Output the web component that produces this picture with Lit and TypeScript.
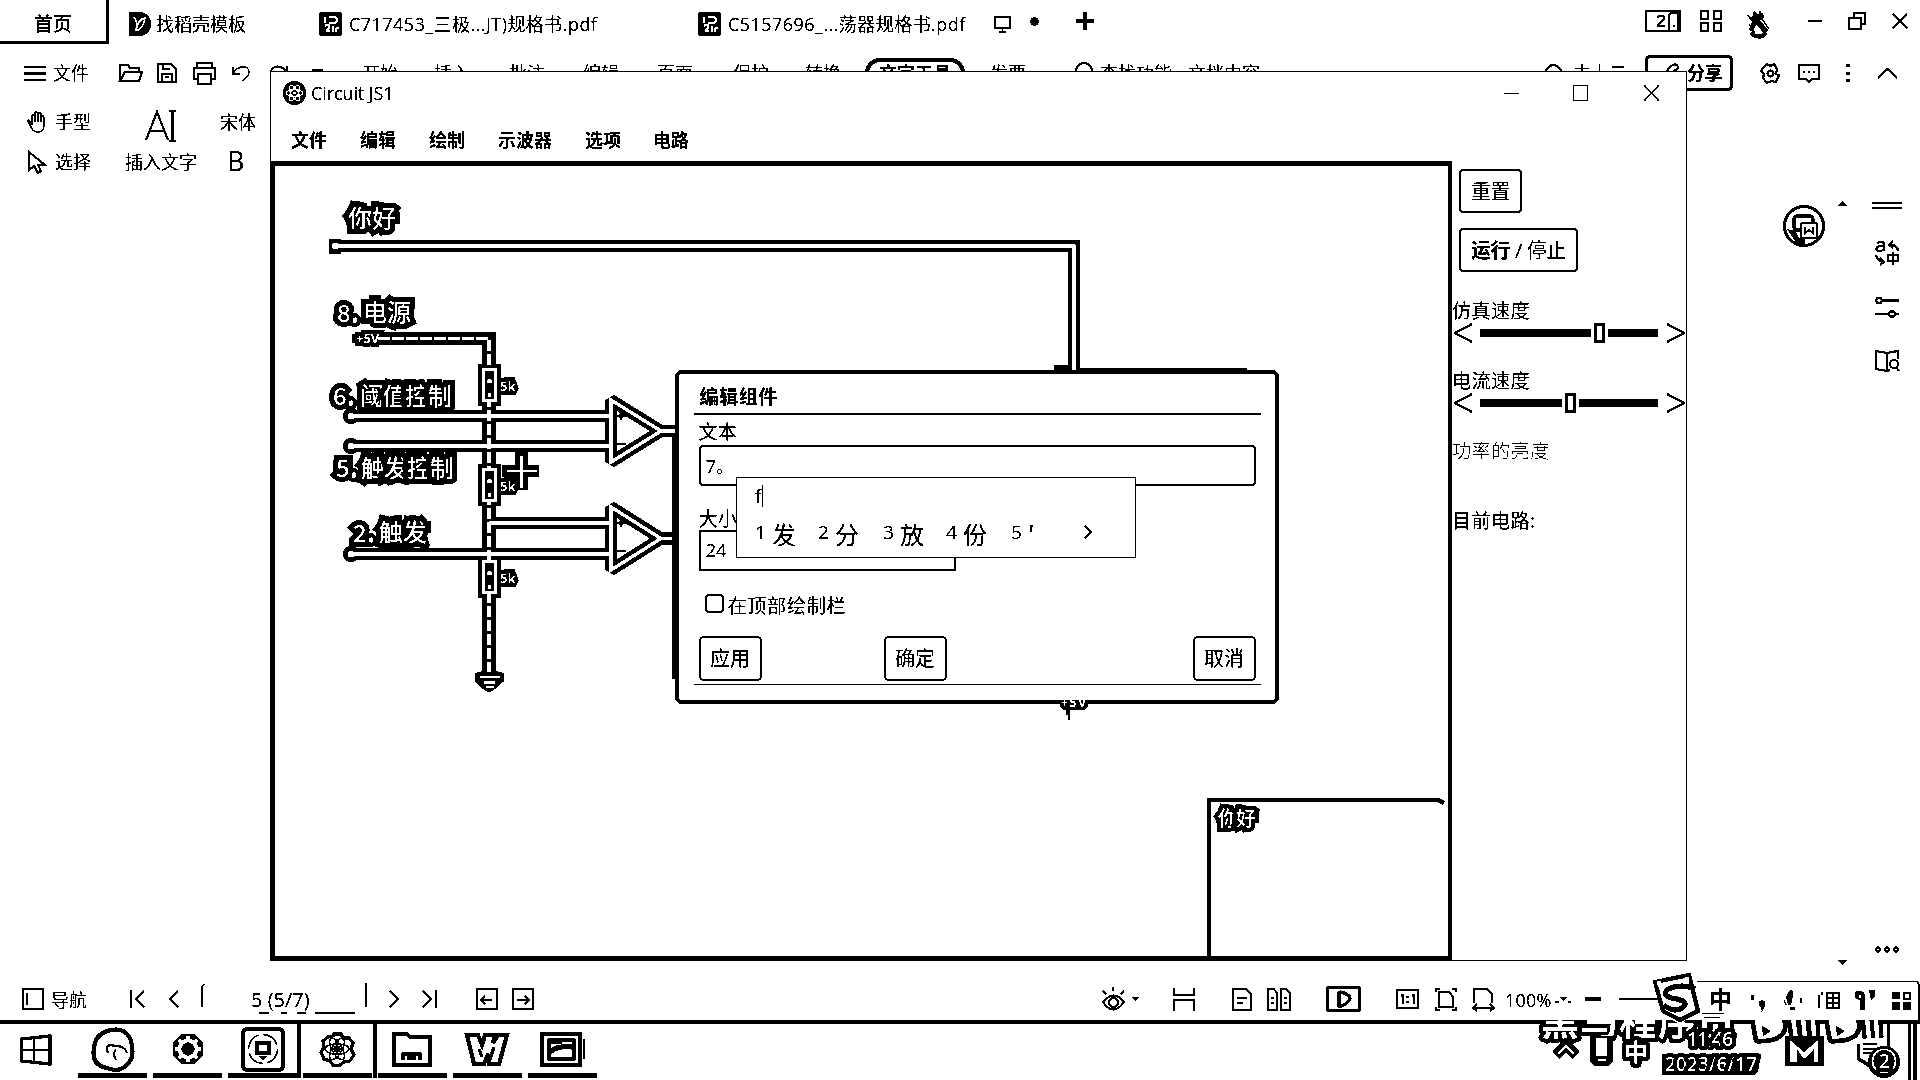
import { LitElement, html, svg, css } from "lit";
import { customElement } from "lit/decorators.js";

const icon = (w: number, h: number, body: unknown, cls = "") =>
  html`<svg class="ic ${cls}" width=${w} height=${h} viewBox="0 0 ${w} ${h}">${body}</svg>`;

const base = css`
  * { box-sizing: border-box; }
  :host {
    font-family: "Open Sans", "Noto Sans CJK SC", sans-serif;
    font-size: 18px;
    line-height: 24px;
    color: #000;
  }
  .ic { display: block; fill: none; stroke: #000; stroke-width: 2; overflow: visible; }
  .f { fill: #000; stroke: none; }
  .w { fill: #fff; stroke: none; }
  .ws { fill: none; stroke: #fff; }
  .s1 { stroke-width: 1.3; }
  .s3 { stroke-width: 3; }
  .s4 { stroke-width: 4; }
  .s5 { stroke-width: 5; }
  span { white-space: nowrap; }
`;

@customElement("office-tabs")
class OfficeTabs extends LitElement {
  static styles = [base, css`
    :host { display: block; }
    .bar {
      display: grid; height: 44px; align-items: center;
      grid-template-columns: 129px 27px 163px 30px 349px 30px 266px 36px 46px 569px 55px 46px 62px 40px 44px 28px;
    }
    .home {
      width: 109px; height: 44px; border-right: 3px solid #000; border-bottom: 3px solid #000;
      padding: 12px 0 0 34px; font-weight: 500; font-size: 19px; letter-spacing: -0.3px;
    }
    .t { padding-top: 3px; }
    .l1 { letter-spacing: 0.45px; }
    .ic { margin-top: 4px; }
    .up { margin-top: -2px; }
  `];
  render() {
    const pdf = svg`<rect class="f" width="23" height="24" rx="3"/><path class="ws" stroke-width="2.4" d="M6 5v6M10 5h5a3 3 0 0 1 0 6h-5M6 14c4-3 6 2 3 3s0 3 2 2M14 14v6M17 16h3M17 20v-4"/>`;
    return html`<div class="bar">
      <div class="home">首页</div>
      ${icon(22, 24, svg`<path class="f" d="M0 0h10c16 0 16 24 0 24H0z"/><path class="ws" stroke-width="1.800" d="M4 5c4 1 4 9 3 14M7 19c1-9 4-12 9-13-1 7-3 11-9 13"/>`)}
      <span class="t">找稻壳模板</span>
      ${icon(23, 24, pdf)}<span class="t l1">C717453_三极...JT)规格书.pdf</span>
      ${icon(23, 24, pdf)}<span class="t l1">C5157696_...荡器规格书.pdf</span>
      ${icon(17, 17, svg`<path d="M1 1h15v11H1zM8.500 12v4M5 16h7" class="s1"/>`)}
      ${icon(9, 9, svg`<circle class="f" cx="4.500" cy="4.500" r="4.200"/>`, "up")}
      ${icon(18, 18, svg`<path class="s3" d="M9 0v18M0 9h18"/>`, "up")}
      ${icon(36, 22, svg`<path d="M1 1h34v20H1z"/><path d="M13 8c0-3 6-3 6 0 0 3-6 5-6 8h7M24 20V5l2-2h7v17"/><path d="M28 16h2"/>`, "up")}
      ${icon(22, 22, svg`<path d="M1 1h7v8H1zM14 1h7v8h-7zM1 13h7v8H1zM14 13h7v8h-7z"/>`, "up")}
      ${icon(26, 28, svg`<path class="f" d="M8 0l3 4 6-1 1 5-4 2 8 10-3 3-9-9-3 8-4-2 3-8-5-7 5 3z"/><path d="M3 14l6 9M16 9l7 10M12 14l5 8M1 5l5 4M14 1v4" class="s1"/><path class="s4" d="M5 23q8 7 15 0"/>`)}
      ${icon(15, 4, svg`<path d="M0 2h14"/>`, "up")}
      ${icon(18, 18, svg`<path class="s1" stroke-width="1.600" d="M1 6h12v11H1zM6 6V1h11v11h-4"/>`, "up")}
      ${icon(16, 16, svg`<path d="M1 1l14 14M15 1L1 15"/>`, "up")}
    </div>`;
  }
}

@customElement("office-ribbon")
class OfficeRibbon extends LitElement {
  static styles = [base, css`
    :host { display: block; }
    .bar {
      display: grid; height: 58px; align-items: center;
      grid-template-columns: 24px 29px 66px 38px 36px 39px 38px 42px 50px 72px 75px 74px 74px 76px 72px 60px 125px 85px 25px 88px 356px 29px 72px 115px 38px 48px 31px 43px;
    }
    .bar > :first-child { grid-column: 2; }
    .pill { width: 100px; height: 30px; border: 4px solid #000; border-radius: 15px; text-align: center; font-weight: 700; line-height: 23px; }
    .share {
      width: 88px; height: 36px; border: 3px solid #000; border-radius: 5px; display: flex; align-items: center;
      padding-left: 17px; gap: 6px; font-weight: 700; letter-spacing: -0.5px;
    }
    .tools {
      display: grid; height: 80px; grid-template-rows: 40px 40px; align-items: center;
      grid-template-columns: 27px 28px 70px 95px 80px;
    }
    .hand { grid-column: 2; }
    .b { font-size: 27px; padding-left: 7px; line-height: 36px; margin-top: -3px; }
    .ai { margin-left: 20px; margin-top: 7px; }
  `];
  render() {
    return html`<div class="bar">
      ${icon(22, 15, svg`<path d="M0 1h22M0 7.500h22M0 14h22"/>`)}
      <span>文件</span>
      ${icon(24, 18, svg`<path d="M1 17V1h8l2 3h9v4M1 17L6 8h17l-3 9z"/>`)}
      ${icon(20, 20, svg`<path d="M1 1h13l5 5v13H1zM5 19v-8h10v8M6 1v5h7M8 14h4"/>`)}
      ${icon(23, 23, svg`<path d="M4 6V1h15v5M4 17H1V6h21v11h-3M5 12h13v10H5z"/>`)}
      ${icon(19, 17, svg`<path class="s1" stroke-width="1.600" d="M1 2v7h7M1 9C4 1 17-1 17 7c0 4-4 7-7 9"/>`)}
      ${icon(19, 17, svg`<path d="M17 1v7h-7M17 8C12-1 1 0 1 8c0 3 4 6 7 7"/>`)}
      ${icon(11, 8, svg`<path d="M0 1h11"/>`)}
      <span>开始</span><span>插入</span><span>批注</span><span>编辑</span><span>页面</span><span>保护</span><span>转换</span>
      <div class="pill">文字工具</div>
      <span>发票</span>
      ${icon(20, 22, svg`<circle cx="9" cy="9" r="8"/><path d="M14 14l6 7"/>`)}
      <span>查找功能</span><span>文档内容</span>
      ${icon(20, 20, svg`<path d="M2 14C0 7 5 2 9 2s8 3 8 7"/>`)}
      <span>未上云</span>
      <div class="share">${icon(16, 20, svg`<path d="M3 12C0 4 12-2 13 4c0 4-8 4-8 9h11"/>`)}<span>分享</span></div>
      ${icon(21, 21, svg`<path d="M7 1l3 2 4-2 3 5-1 5 3 1-3 7-5-1-4 2-4-5 1-4-3-3 3-4z"/><circle cx="10.500" cy="10.500" r="3"/>`)}
      ${icon(22, 19, svg`<path d="M1 1h20v14h-7l-3 3-3-3H1z"/><path d="M5 8h2M10 8h2M15 8h2"/>`)}
      ${icon(4, 18, svg`<path class="f" d="M0 0h4v3H0zM0 8h4v3H0zM0 15h4v3H0z"/>`)}
      ${icon(21, 11, svg`<path d="M1 10L10.500 1 20 10"/>`)}
    </div>
    <div class="tools">
      ${icon(20, 22, svg`<path class="s1" stroke-width="1.800" d="M5 14V5q1-3 3 0V2q1-2 3 0v3-2q2-2 3 0v3q3-3 3 1v7q0 7-6 7-5 0-7-5L1 10q1-3 4 4M8 5v6M11 4v7M14 5v6"/>`, "hand")}
      <span>手型</span>
      ${icon(31, 32, svg`<path d="M1 30L12 2l11 28M5 21h14"/><path d="M24 1h7M24 31h7M27.500 1v30"/>`, "ai")}
      <span>宋体</span><span></span>
      ${icon(20, 23, svg`<path d="M2 1v18l5-4 4 7 3-2-3-6h7z"/>`, "hand")}
      <span>选择</span><span>插入文字</span><span class="b">B</span>
    </div>`;
  }
}

@customElement("side-strip")
class SideStrip extends LitElement {
  static styles = [base, css`
    :host { display: flex; justify-content: flex-end; height: 779px; padding-right: 17px; }
    .a { margin: 23px 13px 0 0; }
    .b { display: flex; flex-direction: column; justify-content: space-between; padding: 19px 24px 0 0; height: 783px; }
    .c { display: flex; flex-direction: column; width: 32px; align-items: center; padding-top: 20px; }
    .g1 { margin-top: 31px; }
    .g2 { margin-top: 32px; }
    .g3 { margin-top: 33px; }
    .g4 { margin-top: 574px; }
  `];
  render() {
    return html`
      ${icon(42, 42, svg`<circle class="s3" cx="21" cy="21" r="19.500"/><rect class="s3" x="11" y="11" width="19" height="14" rx="3"/><path class="f" d="M4 24l8 2 4 7 6 1v5h-8z"/><rect x="18" y="18" width="16" height="15" rx="2" fill="#fff"/><path d="M22 22v6l4-3 4 3v-6"/>`, "a")}
      <div class="b">
        ${icon(9, 5, svg`<path class="f" d="M0 5l4.500-5L9 5z"/>`)}
        ${icon(9, 5, svg`<path class="f" d="M0 0h9L4.500 5z"/>`)}
      </div>
      <div class="c">
        ${icon(30, 7, svg`<path class="s1" d="M0 1h30M0 6h30"/>`)}
        ${icon(24, 25, svg`<path d="M2 3q7-3 7 2v6M9 6C0 5 0 11 4 11q5 0 5-3M18 1l-4 4 4 3M14 5q8-1 9 6M1 15q1 6 8 7M5 18l4 4-4 3M13 15h10v6H13zM18 12v13"/>`, "g1")}
        ${icon(24, 20, svg`<circle cx="4" cy="3.500" r="2.800"/><path d="M7 3.500h17M0 17h14M20 17h4"/><circle cx="17" cy="17" r="2.800"/>`, "g2")}
        ${icon(24, 22, svg`<path d="M12 21V3L1 1v18l11 2M12 3l11-2v8M12 21l3-1"/><circle cx="19" cy="14" r="4"/><path d="M21 17l3 4"/>`, "g3")}
        ${icon(24, 7, svg`<circle cx="3" cy="3.500" r="2"/><circle cx="12" cy="3.500" r="2"/><circle cx="21" cy="3.500" r="2"/>`, "g4")}
      </div>`;
  }
}

@customElement("office-status")
class OfficeStatus extends LitElement {
  static styles = [base, css`
    :host { display: block; }
    .bar {
      display: grid; height: 63px; border-bottom: 4px solid #000; padding: 17px 0 0 22px; align-items: center;
      grid-template-columns: 29px 79px 38px 33px 50px 114px 24px 33px 54px 36px 590px 30px 41px 59px 35px 59px 70px 39px 37px 33px 55px 25px 34px 40px;
    }
    .bar > span { margin-top: 2px; }
    .n { font-size: 20px; }
    .z { letter-spacing: 0.2px; }
    .fld { margin-top: -8px; }
  `];
  render() {
    return html`<div class="bar">
      ${icon(22, 22, svg`<path d="M1 1h20v20H1z"/><path d="M5 5v12" class="s1"/>`)}
      <span>导航</span>
      ${icon(15, 18, svg`<path d="M1 0v18M14 1L6 9l8 8"/>`)}
      ${icon(11, 18, svg`<path d="M10 1L2 9l8 8"/>`)}
      ${icon(4, 24, svg`<path class="s1" d="M1 24V3l3-2"/>`, "fld")}
      <span class="n">5 (5/7)</span>
      ${icon(2, 24, svg`<path class="s1" d="M1 0v24M-106 30h10M-84 30h6M-68 30h9M-50 30h40"/>`, "fld")}
      ${icon(11, 18, svg`<path d="M1 1l8 8-8 8"/>`)}
      ${icon(15, 18, svg`<path d="M1 1l8 8-8 8M14 0v18"/>`)}
      ${icon(22, 22, svg`<path d="M1 1h20v20H1zM5 12h11M9 8l-4 4 4 4"/>`)}
      ${icon(22, 22, svg`<path d="M1 1h20v20H1zM5 12h11M13 8l4 4-4 4"/>`)}
      ${icon(24, 24, svg`<path d="M1 15q11-13 21 0-11 15-21 0zM11 0v4M1 4l3 3M22 4l-3 3"/><circle cx="11.500" cy="15.500" r="4.500"/>`)}
      ${icon(7, 4, svg`<path class="f" d="M0 0h7L3.500 4z"/>`)}
      ${icon(22, 23, svg`<path d="M1 0v7h20V0M1 23V12h20v11"/>`)}
      ${icon(20, 23, svg`<path d="M1 1h13l5 5v16H1zM5 10h10M5 15h6"/>`)}
      ${icon(24, 23, svg`<path d="M1 1h6l3 4v17H1zM14 1h5l4 4v17h-9zM4 10h3M4 15h3M17 10h3M17 15h3" stroke-width="1.700"/>`)}
      ${icon(35, 26, svg`<rect class="s3" x="1.500" y="1.500" width="32" height="23" rx="1"/><path class="s3" d="M13 20V7q0-2 5 0 7 3 6 6t-8 7z"/>`)}
      ${icon(23, 20, svg`<path d="M1 1h21v18H1zM5 7l2-1v9M16 7l2-1v9M11.500 7v2M11.500 12v2"/>`)}
      ${icon(22, 23, svg`<path d="M4 4h10l4 5v10H4zM1 4V1h4M17 1h4v3M1 19v3h4M17 22h4v-3"/>`)}
      ${icon(23, 23, svg`<path d="M2 15V1h13l5 5v9M1 20h21M5 16l-4 4 4 3M18 16l4 4-4 3"/>`)}
      <span class="z">100%</span>
      ${icon(7, 4, svg`<path class="f" d="M0 0h7L3.500 4z"/><path class="s1" d="M-5 5h4M8 5h3"/>`)}
      ${icon(16, 4, svg`<path class="s3" d="M0 2h16"/>`)}
      ${icon(36, 2, svg`<path class="s1" d="M0 1h40"/>`)}
    </div>`;
  }
}

@customElement("task-bar")
class TaskBar extends LitElement {
  static styles = [base, css`
    :host { display: flex; height: 56px; }
    .win { width: 75px; padding: 10px 0 0 20px; }
    .app { width: 75px; height: 54px; display: flex; flex-direction: column; align-items: center; justify-content: space-between; padding-top: 3px; }
    .app > .ic { flex: none; }
    .app::after { content: ""; width: 69px; height: 5px; background: #000; }
    .on { border: solid #000; border-width: 0 4px; width: 80px; margin: 0 -2px 0 -3px; }
  `];
  render() {
    const apps = [
      svg`<path class="s4" d="M16 4q16-5 23 7 5 16 0 23-8 13-23 7Q0 38 3 21 4 8 16 4z"/><path d="M17 26q-5-10 8-7 9 0 11 7M25 23q-4 3 0 10"/>`,
      svg`<path d="M22 7v30M7 22h30M11.400 11.400l21.200 21.200M32.600 11.400L11.400 32.600" stroke="#000" stroke-width="12"/><circle class="f" cx="22" cy="22" r="15"/><path d="M22 9v26M9 22h26M12.800 12.800l18.400 18.400M31.200 12.800L12.800 31.200" class="ws" stroke-width="4"/><circle class="w" cx="22" cy="22" r="10.500"/><circle class="f" cx="22" cy="22" r="6.500"/>`,
      svg`<rect class="s4" x="2" y="2" width="40" height="41" rx="4"/><circle cx="22" cy="22" r="14.500" class="s1" stroke-dasharray="18 4.700"/><path class="s4" d="M16 16h12v10H16z"/><path class="f" d="M18 29h8l-4 4z"/>`,
      svg`<path class="s3" d="M19 7l7 0 2 4 6 0 4 5-2 6 3 6-4 6-6 1-5 4-6-1-3-4-6-2-3-7 3-5-1-6 5-4 5-1z"/><g class="s1" stroke-width="2"><ellipse cx="22" cy="22" rx="12" ry="5"/><ellipse cx="22" cy="22" rx="12" ry="5" transform="rotate(60 22 22)"/><ellipse cx="22" cy="22" rx="12" ry="5" transform="rotate(120 22 22)"/></g><circle class="f" cx="22" cy="22" r="3.500"/>`,
      svg`<path class="s4" d="M3 7h13l3 3h20v28H3z"/><path class="s3" d="M12 33v-6h17v6M16 31h9"/>`,
      svg`<path class="s4" d="M1 8h11l4 10 3-10h10l-2 8 5-8h9l-8 29H23l-1-10-4 10H8z"/><path class="s3" d="M13 22l3 8M28 20l-5 15"/>`,
      svg`<path class="s4" d="M1 7h38v31H1z"/><path class="s3" d="M8 13h25v19H8z"/><path class="s5" d="M9 25q8-7 23-5"/><path class="s1" d="M10 16h11M43 12v20"/>`,
    ];
    return html`
      <div class="win">${icon(32, 32, svg`<path class="s3" d="M1.500 5L30 2v28L1.500 27z"/><path class="s1" d="M14 4v25M1 16h30"/>`)}</div>
      ${apps.map((a, i) => html`<div class="app ${i === 3 ? "on" : ""}">${icon(44, 44, a)}</div>`)}`;
  }
}

@customElement("circuit-canvas")
class CircuitCanvas extends LitElement {
  static styles = [base, css`
    :host { display: block; }
    .cv { display: block; overflow: hidden; }
    .case { fill: none; stroke: #000; stroke-width: 12; }
    .bev { stroke-linejoin: bevel; }
    .case2 { fill: none; stroke: #000; stroke-width: 13; }
    .core { fill: none; stroke: #fff; stroke-width: 3.5; }
    .thin { stroke-width: 3; }
    .lab { font-family: "Noto Sans CJK SC", sans-serif; font-weight: 500; font-size: 24px; fill: #fff; stroke: #000; stroke-width: 10px; paint-order: stroke; stroke-linejoin: miter; stroke-miterlimit: 2; }
    .sm { font-family: "Open Sans", sans-serif; font-weight: 700; font-size: 13px; stroke-width: 8px; }
    .sc { font-size: 20px; stroke-width: 8px; }
  `];
  render() {
    const wires = "M335 246H1074V372M351 416H610M351 446H610M489 523H610M351 554H610M660 431H682M660 538.500H682";
    const rail = "M378 338.500H489V672";
    const tris = "M611 400L661 431 611 462zM611 507L661 538.500 611 570z";
    return html`<svg class="cv" width="1173" height="790" viewBox="275 166 1173 790">
      <path class="case" d=${wires}/><path class="case2" d=${rail}/>
      <path class="case bev" d=${tris}/>
      <rect class="f" x="329" y="239" width="12" height="15"/>
      ${[416, 446, 554].map((y) => svg`<circle class="f" cx="351" cy=${y} r="8"/>`)}
      ${[368, 468, 560].map((y) => svg`<rect class="f" x="478.500" y=${y - 4} width="22.500" height="42"/>`)}
      <path class="f" d="M475 673q14-5 29 0v8l-9 8q-6 6-12 0l-8-8z"/>
      <path class="case" d="M502 471h37M521.500 452v38"/>
      <text class="lab" x="348" y="227">你好</text>
      <text class="lab" x="337" y="322">8.</text><text class="lab" x="363" y="321">电源</text>
      <text class="lab" x="333" y="405">6.</text><text class="lab" x="360" y="405" textLength="92">阈值控制</text>
      <text class="lab" x="336" y="477">5.</text><text class="lab" x="361" y="477" textLength="93">触发控制</text>
      <text class="lab" x="353" y="542">2.</text><text class="lab" x="379" y="541">触发</text>
      <text class="lab sm" x="356" y="343">+5V</text>
      ${[391, 491, 583].map((y) => svg`<text class="lab sm" x="500" y=${y}>5k</text>`)}
      <path class="core" d=${wires}/><path class="core" d=${rail} stroke-dasharray="12 2"/>
      <path class="core" d=${tris}/>
      <path class="core thin" d="M507 471h30M521.500 456v32M480 677h20M484 682.500h11M486 687h8"/>
      <circle class="w" cx="335.500" cy="246" r="3.500"/>
      ${[416, 446, 554].map((y) => svg`<circle class="w" cx="351" cy=${y} r="3.500"/>`)}
      ${[368, 468, 560].map((y) => svg`<rect class="f" x="482" y=${y} width="15" height="34"/><rect class="core thin" x="483.500" y=${y + 1.5} width="12" height="31"/><circle class="w" cx="489.500" cy=${y + 13} r="2.600"/><circle class="w" cx="489.500" cy=${y + 27} r="2.200"/>`)}
      ${[431, 538].map((y) => svg`<path d="M617 ${y - 15}h9M621 ${y - 19}v8M616 ${y + 13}h10" stroke="#000" stroke-width="2.500"/>`)}
      <path class="f" d="M1054 365h14v8h-14zM1078 368h169v4h-169zM672 436h5v243h-5z"/>
      <path d="M1209 960V800H1438l6 3" fill="none" stroke="#000" stroke-width="4"/>
      <text class="lab sc" x="1218" y="826" textLength="38">你好</text>
    </svg>`;
  }
}

@customElement("edit-dialog")
class EditDialog extends LitElement {
  static styles = [base, css`
    :host { display: block; font-size: 19.2px; line-height: 26px; }
    .dlg { width: 604px; height: 334px; border: 4.500px solid #000; border-radius: 7px; background: #fff; padding: 9px 14.500px 0; display: flex; flex-direction: column; }
    .h { height: 32px; border-bottom: 2px solid #000; padding: 1px 0 0 6px; font-weight: 700; flex: none; letter-spacing: 0.4px; }
    .body { padding: 4px 4px 0 5px; display: flex; flex-direction: column; align-items: flex-start; }
    .fld { width: 557px; height: 41px; border: 2px solid #000; border-radius: 4px; padding: 6px 6px 0 5px; font-size: 18.500px; }
    .num { width: 257px; border-radius: 0; padding-top: 5px; }
    .lb2 { margin-top: 20px; height: 24px; }
    .chk { display: flex; gap: 4px; margin: 22px 0 0 6px; height: 26px; letter-spacing: 0.6px; }
    .box { width: 19px; height: 19px; border: 2px solid #000; border-radius: 4px; margin-top: 1px; }
    .btns { display: grid; grid-template-columns: 185px 309px 63px; margin-top: 17px; }
    .bt { width: 63px; height: 45px; border: 2px solid #000; border-radius: 5px; text-align: center; line-height: 41px; font-size: 20px; }
    .end { border-top: 1px solid #000; margin-top: 3px; }
    .lbl { height: 26px; }
  `];
  render() {
    return html`<div class="dlg">
      <div class="h">编辑组件</div>
      <div class="body">
        <span class="lbl">文本</span>
        <div class="fld">7。</div>
        <span class="lb2">大小</span>
        <div class="fld num">24</div>
        <div class="chk"><div class="box"></div><span>在顶部绘制栏</span></div>
        <div class="btns"><div class="bt">应用</div><div class="bt">确定</div><div class="bt">取消</div></div>
      </div>
      <div class="end"></div>
    </div>`;
  }
}

@customElement("circuit-window")
class CircuitWindow extends LitElement {
  static styles = [base, css`
    :host { display: block; }
    .win { width: 1417px; height: 890px; border: 1px solid #000; background: #fff; display: flex; flex-direction: column; }
    .title { display: grid; height: 42px; align-items: center; padding-left: 12px; grid-template-columns: 28px 1193px 69px 71px 20px; flex: none; }
    .menu { display: grid; height: 47px; padding: 5px 0 0 20px; align-items: center; font-weight: 700; grid-template-columns: 69px 69px 69px 87px 68px 60px; flex: none; }
    .main { display: flex; flex: 1; }
    .cv { width: 1181px; height: 799px; border: solid #000; border-width: 5px 4px 4px; }
    .side { padding: 8px 0 0 7px; font-size: 19.2px; display: flex; flex-direction: column; align-items: flex-start; flex: 1; }
    .bt { border: 2px solid #000; border-radius: 4px; height: 44px; padding: 0 10px; line-height: 42px; font-size: 20px; letter-spacing: -0.4px; }
    .two { margin-top: 15px; }
    .lb { margin: 27px 0 0 -7px; letter-spacing: 0.3px; }
    .sl { display: grid; grid-template-columns: 26px 186px 20px; align-items: center; height: 20px; margin-left: -5px; }
    .lb3 { margin: 26px 0 0 -7px; letter-spacing: 0.3px; }
    .dim { color: #444; font-weight: 300; }
    .lb4 { margin: 46px 0 0 -7px; letter-spacing: 0.3px; }
    .cap { letter-spacing: -0.1px; }
  `];
  slider(x: number) {
    return html`<div class="sl">
      ${icon(19, 20, svg`<path d="M18 1L1 10l17 9"/>`)}
      ${icon(178, 20, svg`<path class="f" d="M0 6.500h178v7H0z"/><path class="w" d="M${x - 3} 0h17v20h-17z"/><rect class="s3" x=${x + 1.5} y="1.500" width="8" height="17"/>`)}
      ${icon(19, 20, svg`<path d="M1 1l17 9L1 19"/>`)}
    </div>`;
  }
  render() {
    return html`<div class="win">
      <div class="title">
        ${icon(23, 24, svg`<ellipse class="f" cx="11.500" cy="12" rx="11.500" ry="12"/><g class="ws" stroke-width="1.300"><ellipse cx="11.500" cy="12" rx="8.500" ry="3.500"/><ellipse cx="11.500" cy="12" rx="8.500" ry="3.500" transform="rotate(60 11.500 12)"/><ellipse cx="11.500" cy="12" rx="8.500" ry="3.500" transform="rotate(120 11.500 12)"/></g><circle class="w" cx="11.500" cy="12" r="1.500"/>`)}
        <span class="cap">Circuit JS1</span>
        ${icon(15, 2, svg`<path class="s1" d="M0 1.500h15"/>`)}
        ${icon(15, 16, svg`<path class="s1" d="M.5.500h14v15H.5z"/>`)}
        ${icon(15, 16, svg`<path class="s1" d="M0 0l15 16M15 0L0 16"/>`)}
      </div>
      <div class="menu"><span>文件</span><span>编辑</span><span>绘制</span><span>示波器</span><span>选项</span><span>电路</span></div>
      <div class="main">
        <div class="cv"><circuit-canvas></circuit-canvas></div>
        <div class="side">
          <div class="bt">重置</div>
          <div class="bt two"><b>运行</b> / 停止</div>
          <span class="lb">仿真速度</span>${this.slider(114)}
          <span class="lb3">电流速度</span>${this.slider(85)}
          <span class="lb3 dim">功率的亮度</span>
          <span class="lb4">目前电路:</span>
        </div>
      </div>
    </div>`;
  }
}

@customElement("ime-popup")
class ImePopup extends LitElement {
  static styles = [base, css`
    :host { display: block; }
    .pop { width: 400px; height: 81px; border: 1.300px solid #000; background: #fff; padding: 7px 0 0 18px; }
    .in { border-right: 1px solid #000; display: block; line-height: 22px; width: 8px; height: 22px; font-size: 19px; }
    .row { display: grid; grid-template-columns: 63px 65px 63px 65px 74px 20px; align-items: center; margin-top: 8px; }
    .row div { white-space: nowrap; display: flex; align-items: center; gap: 6px; height: 34px; font-size: 19px; }
    .k { font-family: "Noto Sans CJK SC", sans-serif; font-size: 24px; padding-top: 3px; }
  `];
  render() {
    return html`<div class="pop"><div class="in">f</div>
      <div class="row">
        ${["发", "分", "放", "份"].map((k, i) => html`<div>${i + 1}<span class="k">${k}</span></div>`)}
        <div>5<span class="k">'</span></div>
        ${icon(8, 14, svg`<path stroke-width="2.500" d="M0 1l6 6-6 6"/>`)}
      </div></div>`;
  }
}

@customElement("tray-area")
class TrayArea extends LitElement {
  static styles = [base, css`
    :host { display: block; }
    .sv { display: block; }
    .o { font-family: "Noto Sans CJK SC", sans-serif; fill: #fff; stroke: #000; stroke-width: 8px; paint-order: stroke; font-weight: 700; stroke-linejoin: round; }
    .wm { font-size: 38px; }
    .clk { font-family: "Open Sans", sans-serif; font-weight: 600; font-size: 19px; }
    .cn { font-size: 24px; }
    .zh { font-size: 23px; font-weight: 700; fill: #000; }
    .n { fill: none; }
    .k { stroke: #000; stroke-width: 2; }
    .ob { stroke: #000; stroke-width: 9; fill: #000; stroke-linejoin: round; }
  `];
  render() {
    const bowls = "M1754 1018l4 21q25 0 25-13l-1-8zM1828 1018l4 21q25 0 25-13l-1-8z";
    const bars = "M1793 1018l3 20M1803 1018l2 20M1813 1018l1 20M1867 1018l2 20M1876 1018l1 20";
    return html`<svg class="sv" width="420" height="110" viewBox="1500 970 420 110">
      <clipPath id="low"><rect x="1500" y="1020" width="420" height="60"/></clipPath>
      <g clip-path="url(#low)">
        <text class="o wm" x="1541" y="1035" textLength="194">黑马程序员</text>
        <path class="ob" d=${bowls}/><path class="n" stroke="#000" stroke-width="13" d=${bars}/>
        <path class="w" d=${bowls}/><path class="ws" stroke-width="4.500" d=${bars}/>
        <path class="f" d="M1762 1026l9 5-8 5zM1836 1026l9 5-8 5z"/>
      </g>
      <path class="f" d="M1887 1022h3v30h-3zM1908 1022h3v58h-3zM1913 1022h4v58h-4z"/>
      <path class="n" stroke="#000" stroke-width="11" d="M1556 1055l10-10 10 10"/><path class="ws" stroke-width="3" d="M1558 1054l8-8 8 8"/>
      <path class="f" d="M1590 1036h23v25l-5 5h-13l-5-5z"/><path class="w" d="M1596 1038h11v18h-11zM1598 1059h8v2h-8z"/>
      <text class="o cn" x="1624" y="1061">中</text>
      <text class="o clk" x="1687" y="1046" textLength="46">11:46</text>
      <path class="f" d="M1662 1054h99l-3 17-4 4h-92z"/>
      <text class="o clk" x="1665" y="1071" textLength="92">2023/6/17</text>
      <path class="f" d="M1785 1036h39v30h-39z"/><path class="w" d="M1790 1040l14 12 14-12v22h-4v-13l-8 9h-3l-6-9v13h-7z"/><path class="f" d="M1794 1036h19l-9 12z"/>
      <path class="k" d="M1863 1044h14M1863 1049h14M1863 1053h12"/>
      <path class="f" d="M1857 1044h3v14l14 8-4 2-13-8z"/>
      <circle class="f" cx="1884" cy="1062" r="16"/><circle class="w" cx="1884" cy="1061" r="12.500"/><circle class="f" cx="1884" cy="1061" r="10.500"/>
      <text class="o clk" x="1879" y="1068">2</text>
      <path class="w" d="M1658 981h262v39h-262z"/>
      <path d="M1697 981.500h220l2 3v36" fill="none" stroke="#000" stroke-width="1.400"/>
      <path d="M1655 982l34-7 9 36-18 9-17-9z" fill="#fff" stroke="#000" stroke-width="4"/>
      <path class="n" stroke="#000" stroke-width="5" d="M1695 989q-13-6-27 0-8 8 9 10 13 3 5 9-9 5-18-3"/>
      <circle class="w" cx="1659" cy="983" r="2.500"/><circle class="w" cx="1687" cy="979" r="2.500"/>
      <path class="n" stroke="#000" stroke-width="1.300" d="M1702 1013.500h22M1704 1017.500h16"/>
      <text class="zh" x="1709" y="1008">中</text>
      <path class="f" d="M1759 1001q8-2 6 5l-4 8q2-6-2-9zM1751 995h3v5h-3zM1790 990q4 0 3 5l-2 10h-3l-2-8zM1790 1007h5v3h-5zM1784 999l3 6h-2zM1800 998v5h2v-5z"/>
      <path class="n" stroke="#000" stroke-width="1.500" d="M1827 993h12v15h-12zM1827 998h12M1827 1003h12M1833 993v15M1819 995v13M1822 992v3"/>
      <path class="f" d="M1855 992q8-3 10 3v15h-5v-10q-7-1-5-8zM1869 990h6v7l-4 3z"/><path class="w" d="M1859 995h2v3h-2z"/>
      <path class="f" d="M1892 992h8v7h-8zM1892 1002h8v8h-8zM1903 1002h8v8h-8z"/><path fill="none" stroke="#000" stroke-width="2" d="M1904 993h6v6h-6z"/>
    </svg>`;
  }
}

@customElement("app-root")
class AppRoot extends LitElement {
  static styles = [base, css`
    :host { display: block; }
    .page { position: relative; width: 1920px; height: 1080px; overflow: hidden; background: #fff; filter: url(#ink); }
    .over { position: absolute; }
    .cw { left: 270px; top: 71px; }
    .dg { left: 675px; top: 369.500px; }
    .vv { left: 1060px; top: 698px; }
    .im { left: 736px; top: 477px; }
    .tr { left: 1500px; top: 970px; }
    .defs { position: absolute; width: 0; height: 0; }
    .v5 { font-family: "Open Sans", sans-serif; font-weight: 700; font-size: 12px; fill: #fff; stroke: none; }
  `];
  render() {
    return html`
    <svg class="defs"><filter id="ink" x="0" y="0" width="100%" height="100%" color-interpolation-filters="sRGB">
      <feColorMatrix type="saturate" values="0"/>
      <feComponentTransfer><feFuncR type="discrete" tableValues="0 0 0 1 1"/><feFuncG type="discrete" tableValues="0 0 0 1 1"/><feFuncB type="discrete" tableValues="0 0 0 1 1"/></feComponentTransfer>
    </filter></svg>
    <div class="page">
      <office-tabs></office-tabs>
      <office-ribbon></office-ribbon>
      <side-strip></side-strip>
      <office-status></office-status>
      <task-bar></task-bar>
      <circuit-window class="over cw"></circuit-window>
      <edit-dialog class="over dg"></edit-dialog>
      <div class="over vv">${icon(28, 22, svg`<path class="f" d="M0 2h28v6l-3 4H4L0 8z"/><text class="v5" x="1" y="9" textLength="25">+5V</text><path class="s1" d="M7 12v5M9 12v10"/>`)}</div>
      <ime-popup class="over im"></ime-popup>
      <tray-area class="over tr"></tray-area>
    </div>`;
  }
}
